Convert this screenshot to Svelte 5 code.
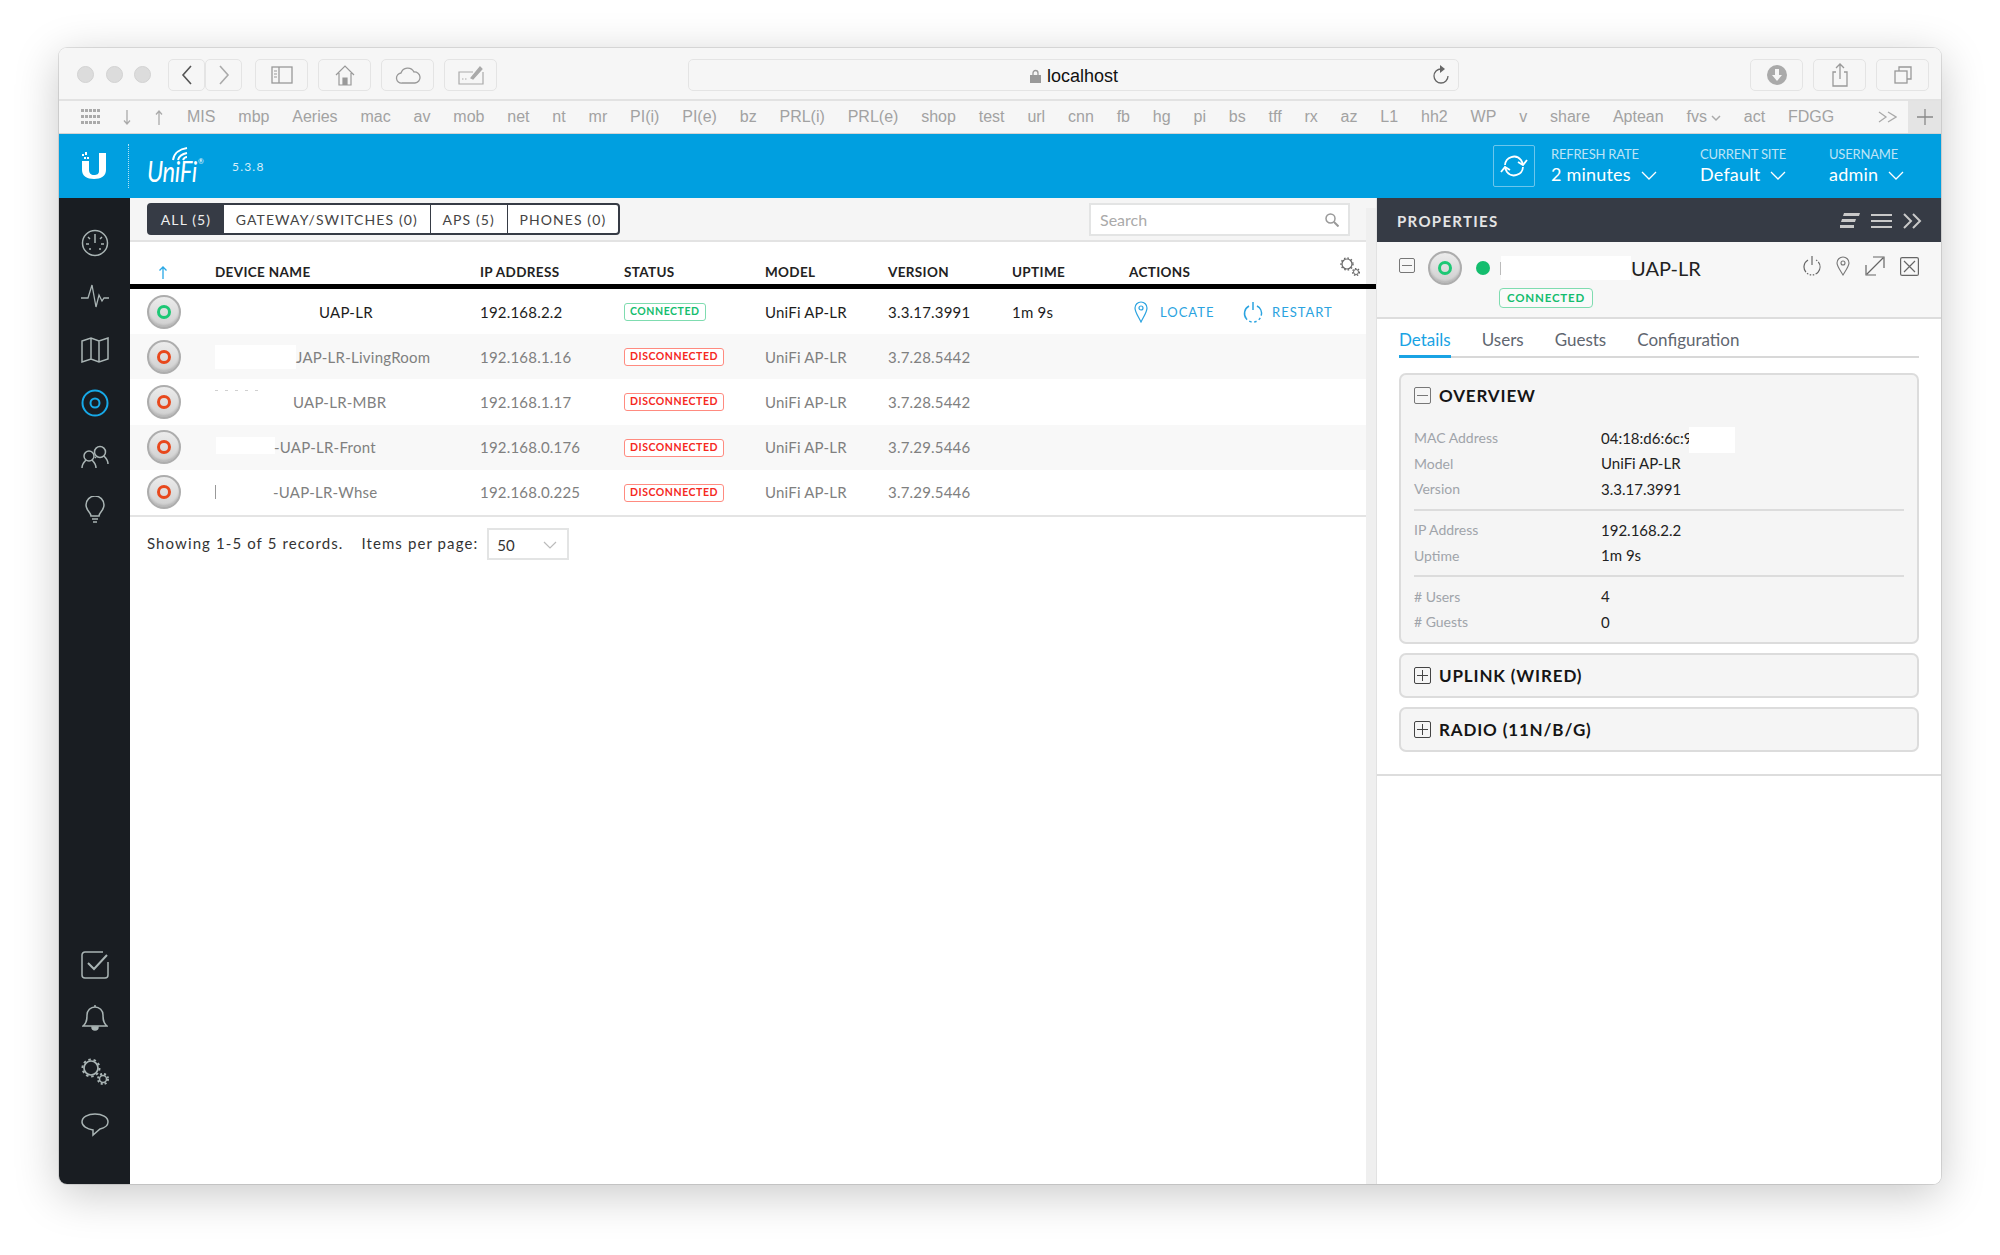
<script>
  const bookmarks = ['MIS','mbp','Aeries','mac','av','mob','net','nt','mr','PI(i)','PI(e)','bz','PRL(i)','PRL(e)','shop','test','url','cnn','fb','hg','pi','bs','tff','rx','az','L1','hh2','WP','v','share','Aptean','fvs','act','FDGG'];

  const filters = ['ALL (5)', 'GATEWAY/SWITCHES (0)', 'APS (5)', 'PHONES (0)'];
  const columns = ['', 'DEVICE NAME', 'IP ADDRESS', 'STATUS', 'MODEL', 'VERSION', 'UPTIME', 'ACTIONS'];

  const devices = [
    { name: 'UAP-LR', gap: 104, kind: 'blank', ip: '192.168.2.2', version: '3.3.17.3991', uptime: '1m 9s', up: true },
    { name: 'JAP-LR-LivingRoom', gap: 81, kind: 'mask', ip: '192.168.1.16', version: '3.7.28.5442' },
    { name: 'UAP-LR-MBR', gap: 78, kind: 'specks', ip: '192.168.1.17', version: '3.7.28.5442' },
    { name: '-UAP-LR-Front', gap: 59, kind: 'mask small', ip: '192.168.0.176', version: '3.7.29.5446' },
    { name: '-UAP-LR-Whse', gap: 58, kind: 'tick', ip: '192.168.0.225', version: '3.7.29.5446' }
  ];

  const overview = [
    [['MAC Address', '04:18:d6:6c:9'], ['Model', 'UniFi AP-LR'], ['Version', '3.3.17.3991']],
    [['IP Address', '192.168.2.2'], ['Uptime', '1m 9s']],
    [['# Users', '4'], ['# Guests', '0']]
  ];
</script>

<div class="window">
  <div class="titlebar">
    <div class="lights"><i></i><i></i><i></i></div>
    <div class="nav-pair">
      <button class="tb nav">
        <svg width="14" height="22" viewBox="0 0 14 22"><path d="M11 2 3 11l8 9" fill="none" stroke="#555" stroke-width="1.6"/></svg>
      </button>
      <button class="tb nav">
        <svg width="14" height="22" viewBox="0 0 14 22"><path d="m3 2 8 9-8 9" fill="none" stroke="#aaa" stroke-width="1.6"/></svg>
      </button>
    </div>
    <button class="tb wide tb-first">
      <svg width="22" height="18" viewBox="0 0 22 18" fill="none" stroke="#999" stroke-width="1.3"><rect x="1" y="1" width="20" height="16"/><path d="M8 1v16"/><path d="M3 5h3M3 8h3M3 11h3" stroke-width="1"/></svg>
    </button>
    <button class="tb wide">
      <svg width="20" height="22" viewBox="0 0 20 22" fill="none" stroke="#999" stroke-width="1.2"><path d="M1 11 10 2l9 9M4 9v12h12V9"/><path d="M8 21v-7h4v7" fill="#999"/></svg>
    </button>
    <button class="tb wide">
      <svg width="26" height="18" viewBox="0 0 26 18" fill="none" stroke="#999" stroke-width="1.3"><path d="M7 17a5 5 0 0 1-1-10 7 7 0 0 1 13-1 5.500 5.500 0 0 1 1 11z"/></svg>
    </button>
    <button class="tb wide">
      <svg width="26" height="20" viewBox="0 0 26 20" fill="none" stroke="#aaa" stroke-width="1.2"><path d="M15 7H1v12h24V7"/><path d="M4 14h6" stroke-dasharray="1.500 1.500"/><path d="m13 13 9-11 2 2-9 10z" fill="#aaa"/></svg>
    </button>
    <div class="url">
      <svg width="11" height="14" viewBox="0 0 11 14"><path d="M3 6V4a2.500 2.500 0 0 1 5 0v2" fill="none" stroke="#999" stroke-width="1.300"/><rect y="6" width="11" height="8" fill="#999"/></svg>
      <span>localhost</span>
      <svg class="reload" width="18" height="20" viewBox="0 0 18 20" fill="none" stroke="#666" stroke-width="1.300"><path d="M9 4a7 7 0 1 0 7 7"/><path d="M8 0l5 4-5 4z" fill="#666" stroke="none"/></svg>
    </div>
    <div class="tb-right">
      <button class="tb wide">
        <svg width="20" height="20" viewBox="0 0 20 20"><circle cx="10" cy="10" r="10" fill="#aaa"/><path d="M8 4h4v6h3l-5 6-5-6h3z" fill="#f6f6f6"/></svg>
      </button>
      <button class="tb wide">
        <svg width="18" height="24" viewBox="0 0 18 24" fill="none" stroke="#999" stroke-width="1.300"><path d="M5 9H2v14h14V9h-3M9 16V2M5 5l4-4 4 4"/></svg>
      </button>
      <button class="tb wide">
        <svg width="18" height="18" viewBox="0 0 18 18" fill="none" stroke="#999" stroke-width="1.300"><rect x="1" y="5" width="12" height="12"/><path d="M5 5V1h12v12h-4"/></svg>
      </button>
    </div>
  </div>

  <div class="bookmarks">
    <svg class="grid-ico" width="20" height="16" viewBox="0 0 20 16" fill="#aaa">
      {#each [0, 6, 12] as y}
        {#each [0, 4, 8, 12, 16] as x}<rect {x} {y} width="3" height="3"/>{/each}
      {/each}
    </svg>
    <svg class="arr first-arr" width="10" height="15" viewBox="0 0 10 15" fill="none" stroke="#aaa" stroke-width="1.300"><path d="M5 0v14M2 10.500l3 3.500 3-3.500"/></svg>
    <svg class="arr" width="10" height="15" viewBox="0 0 10 15" fill="none" stroke="#aaa" stroke-width="1.300"><path d="M5 15V1M2 4.500 5 1l3 3.500"/></svg>
    <div class="marks">
      {#each bookmarks as b}
        <span>{b}{#if b === 'fvs'}<svg class="fvs" width="10" height="7" viewBox="0 0 10 7"><path d="m1 1 4 4 4-4" fill="none" stroke="#aaa" stroke-width="1.500"/></svg>{/if}</span>
      {/each}
    </div>
    <svg class="more" width="19" height="12" viewBox="0 0 19 12" fill="none" stroke="#aaa" stroke-width="1.300"><path d="m1 1 7 5-7 5M10 1l8 5-8 5"/></svg>
    <span class="plus">
      <svg width="16" height="16" viewBox="0 0 16 16"><path d="M8 0v16M0 8h16" stroke="#888" stroke-width="1.300"/></svg>
    </span>
  </div>

  <header class="topbar">
    <svg class="u-logo" width="24" height="27" viewBox="0 0 24 27" fill="#fff">
      <path d="M0 9h7v9c0 3 2 5 5 5 3 0 5-1 5-4V1h7v17c0 6-5 9-12 9S0 24 0 18z"/>
      <rect x="0" y="2" width="2" height="2"/><rect x="3" y="0" width="2" height="3"/><rect x="2" y="5" width="2" height="2"/><rect x="5" y="5" width="2" height="2"/>
    </svg>
    <span class="dotted"></span>
    <div class="unifi">
      <svg width="22" height="14" viewBox="0 0 22 14" fill="none" stroke="#fff" stroke-width="2"><path d="M2 13C3 6 9 2 16 1M7 13c1-4 4-6 9-7M12 13c1-2 2-3 4-3"/></svg>
      <span class="uni-text">UniFi</span><span class="reg">®</span>
    </div>
    <span class="ver">5.3.8</span>

    <div class="top-right">
      <button class="refresh">
        <svg width="28" height="24" viewBox="0 0 28 24" fill="none" stroke="#fff" stroke-width="1.800"><path d="M5 11a9 9 0 0 1 16-5l2 4"/><path d="m27 6-4 5-5-3"/><path d="M23 13a9 9 0 0 1-16 5l-2-4"/><path d="m1 18 4-5 5 3"/></svg>
      </button>
      <div class="drop d1"><small>REFRESH RATE</small><b>2 minutes<svg width="16" height="9" viewBox="0 0 16 9"><path d="m1 1 7 7 7-7" fill="none" stroke="#fff" stroke-width="1.300"/></svg></b></div>
      <div class="drop d2"><small>CURRENT SITE</small><b>Default<svg width="16" height="9" viewBox="0 0 16 9"><path d="m1 1 7 7 7-7" fill="none" stroke="#fff" stroke-width="1.300"/></svg></b></div>
      <div class="drop d3"><small>USERNAME</small><b>admin<svg width="16" height="9" viewBox="0 0 16 9"><path d="m1 1 7 7 7-7" fill="none" stroke="#fff" stroke-width="1.300"/></svg></b></div>
    </div>
  </header>

  <div class="body">
    <nav class="side">
      <div class="side-group top">
        <span class="side-ico"><svg width="28" height="28" viewBox="0 0 28 28" fill="none" stroke="#a9b4b4" stroke-width="1.500"><circle cx="14" cy="14" r="12.500"/><path d="M14 5v9M7 8l2 2M21 8l-2 2M5 15h3M23 15h-3M8 20h2M20 20h-2"/></svg></span>
        <span class="side-ico"><svg width="30" height="26" viewBox="0 0 30 26" fill="none" stroke="#a9b4b4" stroke-width="1.300"><path d="M1 15h7l4-13 4 22 3-12 3 6 2-3h5"/></svg></span>
        <span class="side-ico"><svg width="28" height="26" viewBox="0 0 28 26" fill="none" stroke="#a9b4b4" stroke-width="1.500"><path d="M1 4l9-3 8 3 9-3v21l-9 3-8-3-9 3zM10 1v21M18 4v21"/></svg></span>
        <span class="side-ico"><svg width="28" height="28" viewBox="0 0 28 28" fill="none" stroke="#17a9e8" stroke-width="2"><circle cx="14" cy="14" r="12.500"/><circle cx="14" cy="14" r="4.500"/></svg></span>
        <span class="side-ico"><svg width="28" height="24" viewBox="0 0 28 24" fill="none" stroke="#a9b4b4" stroke-width="1.500"><circle cx="8" cy="11" r="5"/><circle cx="19" cy="7" r="5.500"/><path d="M1 23c0-4 2-6 4-8M15 23c0-4-2-6-4-8M14 13l1-1M27 19c0-4-2-6-4-8"/></svg></span>
        <span class="side-ico"><svg width="20" height="28" viewBox="0 0 20 28" fill="none" stroke="#a9b4b4" stroke-width="1.500"><path d="M6 20c0-4-5-5-5-11a9 9 0 0 1 18 0c0 6-5 7-5 11z"/><path d="M7 23h6M8 26h4"/></svg></span>
      </div>
      <div class="side-group bottom">
        <span class="side-ico"><svg width="28" height="28" viewBox="0 0 28 28" fill="none" stroke="#a9b4b4" stroke-width="1.500"><path d="M22 1H4a3 3 0 0 0-3 3v20a3 3 0 0 0 3 3h20a3 3 0 0 0 3-3V11"/><path d="m7 12 6 6L26 4" stroke-width="2"/></svg></span>
        <span class="side-ico"><svg width="26" height="28" viewBox="0 0 26 28" fill="none" stroke="#a9b4b4" stroke-width="1.500"><path d="M1 22c4-3 4-7 4-11a8 8 0 0 1 16 0c0 4 0 8 4 11z"/><path d="M13 1v2"/><path d="M10 23a3 3 0 0 0 6 0z" fill="#a9b4b4"/></svg></span>
        <span class="side-ico"><svg width="28" height="28" viewBox="0 0 28 28" fill="none" stroke="#a9b4b4"><circle cx="10" cy="10" r="7" stroke-width="1.700"/><circle cx="10" cy="10" r="8.500" stroke-width="2" stroke-dasharray="2.500 2.800"/><circle cx="22" cy="21" r="3.500" stroke-width="1.500"/><circle cx="22" cy="21" r="5" stroke-width="2" stroke-dasharray="2 2"/></svg></span>
        <span class="side-ico"><svg width="28" height="24" viewBox="0 0 28 24" fill="none" stroke="#a9b4b4" stroke-width="1.500"><path d="M14 1C7 1 1 4 1 9c0 4 5 7 11 8l0 5 7-6c5-1 8-4 8-7 0-5-6-8-13-8z"/></svg></span>
      </div>
    </nav>

    <main class="main">
      <div class="toolbar">
        <div class="filters">
          {#each filters as f, i}
            <span class="filter" class:active={i === 0}>{f}</span>
          {/each}
        </div>
        <div class="search">
          <span>Search</span>
          <svg width="14" height="14" viewBox="0 0 14 14" fill="none" stroke="#999" stroke-width="1.500"><circle cx="5.500" cy="5.500" r="4.500"/><path d="m9 9 4.500 4.500" stroke-width="2"/></svg>
        </div>
      </div>

      <div class="thead">
        {#each columns as c, i}
          <span class="th">
            {#if i === 0}
              <svg width="10" height="13" viewBox="0 0 10 13" fill="none" stroke="#29a8e6" stroke-width="1.300"><path d="M5 13V1M1.500 4.500 5 1l3.500 3.500"/></svg>
            {:else}{c}{/if}
          </span>
        {/each}
        <svg class="th-gear" width="20" height="20" viewBox="0 0 20 20" fill="none" stroke="#666"><circle cx="7" cy="7" r="5" stroke-width="1.200"/><circle cx="7" cy="7" r="6" stroke-width="1.400" stroke-dasharray="1.500 2"/><circle cx="16" cy="15" r="2.500" stroke-width="1"/><circle cx="16" cy="15" r="3.500" stroke-width="1.200" stroke-dasharray="1.500 1.500"/></svg>
      </div>

      <div class="rows">
        {#each devices as d, i}
          <div class="row" class:alt={i % 2 === 1} class:off={!d.up}>
            <div class="cell-ico">
              <span class="dev"><i class:green={d.up}></i></span>
            </div>
            <div class="name">
              <span class="lead {d.kind}" style="width: {d.gap}px"></span>{d.name}
            </div>
            <div class="ip">{d.ip}</div>
            <div><span class="badge" class:bad={!d.up}>{d.up ? 'CONNECTED' : 'DISCONNECTED'}</span></div>
            <div>UniFi AP-LR</div>
            <div>{d.version}</div>
            <div>{d.uptime ?? ''}</div>
            {#if d.up}
              <div class="actions">
                <span class="act locate">
                  <svg width="14" height="22" viewBox="0 0 14 22" fill="none" stroke="#2aa3e0" stroke-width="1.200"><path d="M7 21C4 15 1 11 1 7a6 6 0 0 1 12 0c0 4-3 8-6 14z"/><circle cx="7" cy="7" r="2"/></svg>
                  LOCATE
                </span>
                <span class="act">
                  <svg width="20" height="22" viewBox="0 0 20 22" fill="none" stroke="#2aa3e0" stroke-width="1.500"><path d="M10 1v8"/><path d="M6 5a8.500 8.500 0 1 0 8 0" stroke-dasharray="16 2.500 2.500 2.500 2.500 2.500 2.500 2.500"/></svg>
                  RESTART
                </span>
              </div>
            {/if}
          </div>
        {/each}
      </div>

      <div class="pager">
        <span class="pager-text">Showing 1-5 of 5 records.</span>
        <span class="pager-text per">Items per page:</span>
        <div class="select">
          <span>50</span>
          <svg width="14" height="8" viewBox="0 0 14 8"><path d="m1 1 6 6 6-6" fill="none" stroke="#bbb" stroke-width="1.200"/></svg>
        </div>
      </div>

      <div class="scrollbar"></div>
    </main>

    <aside class="panel">
      <div class="panel-head">
        <span>PROPERTIES</span>
        <div class="panel-ico">
          <svg width="20" height="16" viewBox="0 0 20 16" fill="#c9c9c9"><path d="M4 0h16l-1 3H3zM2 6h14l-1 3H1zM0 12h14v3H0z"/></svg>
          <svg width="21" height="14" viewBox="0 0 21 14" stroke="#c9c9c9" stroke-width="2"><path d="M0 1h21M0 7h21M0 13h21"/></svg>
          <svg width="20" height="16" viewBox="0 0 20 16" fill="none" stroke="#c9c9c9" stroke-width="2"><path d="m1 1 7 7-7 7M10 1l7 7-7 7"/></svg>
        </div>
      </div>

      <div class="dev-head">
        <div class="dev-line">
          <svg class="box" width="16" height="15" viewBox="0 0 16 15" fill="none" stroke="#777"><rect x=".5" y=".5" width="15" height="14" rx="1.500"/><path d="M3 7.500h10"/></svg>
          <span class="dev big"><i class="green"></i></span>
          <span class="dot"></span>
          <span class="sep"></span>
          <span class="dev-mask"></span>
          <span class="dev-name">UAP-LR</span>
          <div class="dev-tools">
            <svg width="18" height="22" viewBox="0 0 18 22" fill="none" stroke="#666" stroke-width="1.200"><path d="M9 1v9"/><path d="M5 5a8 8 0 1 0 8 0" stroke-dasharray="14 1.500 1.500 1.500 1.500 1.500 1.500 1.500"/></svg>
            <svg width="14" height="20" viewBox="0 0 14 20" fill="none" stroke="#777" stroke-width="1.100"><path d="M7 19C4 14 1 10 1 7a6 6 0 0 1 12 0c0 3-3 7-6 12z"/><circle cx="7" cy="7" r="2"/></svg>
            <svg width="20" height="20" viewBox="0 0 20 20" fill="none" stroke="#666" stroke-width="1.200"><path d="M8 1h11v11M18 2 2 18M1 9v10h10"/></svg>
            <svg width="19" height="19" viewBox="0 0 19 19" fill="none" stroke="#666" stroke-width="1.200"><rect x=".6" y=".6" width="17.800" height="17.800" rx="1.500"/><path d="m4 4 11 11M15 4 4 15"/></svg>
          </div>
        </div>
        <span class="badge head-badge">CONNECTED</span>
      </div>

      <div class="panel-body">
        <div class="tabs">
          <span class="tab on">Details</span>
          <span class="tab">Users</span>
          <span class="tab">Guests</span>
          <span class="tab">Configuration</span>
        </div>

        <section class="card">
          <h3>
            <svg width="17" height="17" viewBox="0 0 17 17" fill="none" stroke="#777"><rect x=".5" y=".5" width="16" height="16" rx="1.500"/><path d="M3 8.500h11"/></svg>
            OVERVIEW
          </h3>
          {#each overview as group, g}
            <div class="group" class:lead-group={g === 0}>
              {#each group as [k, v]}
                <div class="kv"><span class="k">{k}</span><span class="v">{v}</span></div>
              {/each}
            </div>
          {/each}
          <span class="mac-mask"></span>
        </section>

        <section class="card closed">
          <h3>
            <svg width="17" height="17" viewBox="0 0 17 17" fill="none" stroke="#444"><rect x=".5" y=".5" width="16" height="16" rx="1.500"/><path d="M3 8.500h11M8.500 3v11"/></svg>
            UPLINK (WIRED)
          </h3>
        </section>
        <section class="card closed">
          <h3>
            <svg width="17" height="17" viewBox="0 0 17 17" fill="none" stroke="#444"><rect x=".5" y=".5" width="16" height="16" rx="1.500"/><path d="M3 8.500h11M8.500 3v11"/></svg>
            RADIO (11N/B/G)
          </h3>
        </section>
      </div>
    </aside>
  </div>
</div>

<style>
  :global(body) {
    background: #fff;
    font-family: Lato, "Noto Sans", sans-serif;
  }

  .window {
    margin: 48px 59px 71px;
    height: 1136px;
    display: flex;
    flex-direction: column;
    border-radius: 8px;
    overflow: hidden;
    box-shadow: 0 10px 45px rgba(0, 0, 0, 0.22), 0 0 0 1px rgba(0, 0, 0, 0.1);
    background: #fff;
  }

  /* browser chrome */
  .titlebar {
    height: 53px;
    box-sizing: border-box;
    padding-top: 11px;
    display: flex;
    align-items: flex-start;
    background: #f6f6f6;
    border-bottom: 2px solid #e2e2e2;
  }
  .lights {
    display: flex;
    gap: 11.500px;
    margin: 7px 0 0 18px;
    width: 91px;
  }
  .lights i {
    width: 17px;
    height: 17px;
    border-radius: 50%;
    background: #dcdcdc;
    border: 1px solid #d2d2d2;
    box-sizing: border-box;
  }
  .tb {
    height: 32px;
    padding: 0;
    display: flex;
    align-items: center;
    justify-content: center;
    background: #f6f6f6;
    border: 1px solid #e4e4e4;
    border-radius: 5px;
  }
  .nav-pair { display: flex; }
  .nav { width: 37px; }
  .wide { width: 53px; margin-left: 10px; }
  .tb-first { margin-left: 13px; }
  .url {
    position: relative;
    margin-left: 191px;
    width: 771px;
    height: 32px;
    box-sizing: border-box;
    display: flex;
    align-items: center;
    justify-content: center;
    gap: 6px;
    border: 1px solid #e4e4e4;
    border-radius: 5px;
    padding: 2px 0 0 1px;
    font: 18px "Liberation Sans", sans-serif;
    color: #111;
  }
  .reload { position: absolute; right: 8px; top: 5px; }
  .tb-right { display: flex; margin-left: 281px; }
  .tb-right .wide:first-child { margin-left: 10px; }

  .bookmarks {
    height: 33px;
    display: flex;
    align-items: center;
    background: #f6f6f6;
    border-bottom: 1px solid #d4d4d4;
    font: 16px "Liberation Sans", sans-serif;
    color: #a2a2a2;
    box-sizing: border-box;
  }
  .grid-ico { margin-left: 22px; }
  .arr { margin-left: 22px; }
  .first-arr { margin-left: 21px; }
  .marks {
    display: flex;
    gap: 22.850px;
    margin-left: 23px;
    white-space: nowrap;
  }
  .fvs { margin-left: 4px; }
  .more { margin-left: auto; margin-right: 11px; }
  .plus {
    width: 33px;
    height: 32px;
    display: flex;
    align-items: center;
    justify-content: center;
    background: #e4e4e4;
  }

  /* app header */
  .topbar {
    height: 64px;
    flex: none;
    background: #009fe0;
    color: #fff;
    display: flex;
    align-items: center;
    position: relative;
  }
  .u-logo { margin-left: 23px; margin-top: -2px; }
  .dotted {
    margin-left: 22px;
    height: 44px;
    border-left: 1px dotted rgba(255, 255, 255, 0.7);
  }
  .unifi {
    position: relative;
    width: 58px;
    height: 40px;
    margin-left: 18px;
    margin-top: -3px;
  }
  .unifi svg { position: absolute; left: 24px; top: 2px; }
  .uni-text {
    position: absolute;
    left: 0;
    top: 12px;
    font: italic 400 28px/28px Lato, sans-serif;
    letter-spacing: -0.5px;
    transform: scaleX(0.85);
    transform-origin: left;
  }
  .reg { position: absolute; left: 51px; top: 12px; font-size: 7px; }
  .ver {
    margin-left: 27px;
    margin-top: 1px;
    font-size: 12px;
    letter-spacing: 1.200px;
    color: #d6eef9;
  }
  .top-right {
    margin-left: auto;
    display: flex;
    align-items: center;
  }
  .refresh {
    width: 42px;
    height: 42px;
    padding: 0;
    display: flex;
    align-items: center;
    justify-content: center;
    background: none;
    border: 1px solid #6cc6ec;
    border-radius: 2px;
  }
  .drop { display: flex; flex-direction: column; margin-top: -2px; }
  .drop small {
    font-size: 13px;
    line-height: 18px;
    color: #bde4f6;
    letter-spacing: -0.2px;
  }
  .drop b {
    font-weight: 400;
    font-size: 18px;
    line-height: 22px;
    letter-spacing: 0.2px;
    white-space: nowrap;
  }
  .drop svg { margin-left: 10px; vertical-align: 1px; }
  .d1 { margin-left: 16px; width: 149px; }
  .d2 { width: 129px; }
  .d3 { width: 112px; }

  /* layout */
  .body {
    flex: 1;
    min-height: 0;
    display: flex;
  }
  .side {
    width: 71px;
    flex: none;
    background: #191d22;
    display: flex;
    flex-direction: column;
    justify-content: space-between;
  }
  .side-group { display: flex; flex-direction: column; }
  .side-group.top { padding-top: 18px; }
  .side-group.bottom { padding-bottom: 32px; }
  .side-ico {
    height: 53.500px;
    display: flex;
    align-items: center;
    justify-content: center;
    padding-left: 1px;
  }

  .main {
    width: 1246px;
    flex: none;
    position: relative;
    font-size: 15px;
    letter-spacing: 0.2px;
    color: #1d1d1d;
  }
  .scrollbar {
    position: absolute;
    right: 0;
    top: 10px;
    bottom: 0;
    width: 10px;
    background: #efefef;
  }

  .toolbar {
    height: 44px;
    box-sizing: border-box;
    padding: 5px 26px 0 17px;
    display: flex;
    justify-content: space-between;
    align-items: flex-start;
    background: #f5f5f5;
    border-bottom: 2px solid #e3e3e3;
  }
  .filters {
    display: flex;
    height: 32px;
    box-sizing: border-box;
    border: 2px solid #363b45;
    border-radius: 4px;
    font-size: 14px;
    letter-spacing: 1.100px;
    color: #444;
    background: #fff;
  }
  .filter {
    display: flex;
    align-items: center;
    padding: 0 11.800px;
    border-left: 1px solid #363b45;
    white-space: nowrap;
  }
  .filter:first-child { border-left: 0; }
  .filter.active { background: #363b45; color: #eee; }

  .search {
    width: 261px;
    height: 33px;
    box-sizing: border-box;
    padding: 0 9px;
    display: flex;
    align-items: center;
    justify-content: space-between;
    background: #fff;
    border: 2px solid #e3e4e4;
    font-size: 16px;
    letter-spacing: 0;
    color: #aaa;
  }

  .thead {
    position: relative;
    z-index: 1;
    height: 47px;
    box-sizing: border-box;
    padding-top: 18px;
    display: grid;
    grid-template-columns: 85px 265px 144px 141px 123px 124px 117px 1fr;
    align-items: center;
    border-bottom: 5px solid #000;
    font-weight: 700;
    font-size: 13.500px;
    letter-spacing: 0.35px;
    color: #222;
  }
  .th:first-child { padding-left: 28px; line-height: 0; }
  .th-gear { position: absolute; right: 16px; top: 15px; }

  .rows {
    border-bottom: 2px solid #e4e4e4;
    margin-right: 10px;
  }
  .row {
    height: 45.200px;
    display: grid;
    grid-template-columns: 85px 265px 144px 141px 123px 124px 117px 1fr;
    align-items: center;
    white-space: nowrap;
  }
  .row.alt { background: #f8f8f8; }
  .row.off { color: #808080; }

  .cell-ico { padding-left: 17px; line-height: 0; }
  .dev {
    width: 34px;
    height: 34px;
    box-sizing: border-box;
    display: inline-flex;
    align-items: center;
    justify-content: center;
    border-radius: 50%;
    border: 2px solid #adadad;
    background: linear-gradient(#ececec, #cfcfcf);
    box-shadow: inset 0 -2px 2px rgba(0, 0, 0, 0.12);
  }
  .dev i {
    width: 14px;
    height: 14px;
    box-sizing: border-box;
    border-radius: 50%;
    border: 3px solid #e8481c;
  }
  .dev i.green { border-color: #1dc875; }

  .name { display: flex; align-items: center; letter-spacing: 0.25px; }
  .lead { display: block; flex: none; height: 24px; }
  .lead.mask { background: #fff; }
  .lead.small { height: 17px; margin-left: 1px; margin-right: -1px; margin-bottom: 4px; }
  .lead.specks {
    height: 1px;
    margin-bottom: 22px;
    background: repeating-linear-gradient(90deg, #d0d0d0 0 3px, #fff0 3px 10px);
    background-size: 47px 1px;
    background-repeat: no-repeat;
  }
  .lead.tick {
    height: 14px;
    border-left: 1px solid #999;
    box-sizing: border-box;
  }

  .badge {
    display: inline-block;
    box-sizing: border-box;
    height: 18px;
    line-height: 15px;
    padding: 0 5px;
    border: 1px solid #7fdcb0;
    border-radius: 3px;
    background: #fff;
    color: #14bd6e;
    font-size: 10.500px;
    font-weight: 700;
    letter-spacing: 0.55px;
    vertical-align: 2px;
  }
  .badge.bad { border-color: #ff8b80; color: #f5281e; }

  .actions {
    display: flex;
    align-items: center;
    color: #2aa3e0;
    font-size: 13px;
    letter-spacing: 1px;
    padding-top: 1px;
  }
  .act { display: flex; align-items: center; gap: 9px; }
  .locate { margin-left: 5px; width: 109px; gap: 12px; }

  .pager {
    display: flex;
    align-items: center;
    height: 32px;
    padding: 11px 0 0 17px;
    font-size: 15px;
    letter-spacing: 1.100px;
    color: #333;
  }
  .pager-text { margin-top: -2px; }
  .per { margin-left: 18px; }
  .select {
    margin-left: 9px;
    width: 82px;
    height: 32px;
    box-sizing: border-box;
    padding: 2px 10px 0 8px;
    display: flex;
    align-items: center;
    justify-content: space-between;
    border: 2px solid #e3e4e4;
    letter-spacing: 0;
  }

  /* properties panel */
  .panel {
    flex: 1;
    border-left: 1px solid #e2e2e2;
    position: relative;
    background: #fff;
    color: #222;
  }
  .panel-head {
    height: 44px;
    box-sizing: border-box;
    padding: 1px 18px 0 20px;
    display: flex;
    align-items: center;
    justify-content: space-between;
    background: #363b45;
    color: #e4e4e4;
    font-size: 15px;
    font-weight: 700;
    letter-spacing: 1.300px;
  }
  .panel-ico { display: flex; align-items: center; gap: 11px; }

  .dev-head {
    height: 77px;
    box-sizing: border-box;
    padding: 9px 0 0 22px;
    background: #f7f7f7;
    border-bottom: 2px solid #ddd;
  }
  .dev-line {
    display: flex;
    align-items: center;
    height: 34px;
  }
  .box { margin-bottom: 6px; }
  .dev-line .dev { margin-left: 13px; }
  .dot {
    width: 14px;
    height: 14px;
    border-radius: 50%;
    background: #14bd6e;
    margin-left: 14px;
    flex: none;
  }
  .sep { height: 13px; border-left: 1px solid #bbb; margin-left: 10px; }
  .dev-mask { width: 130px; height: 24px; background: #fff; }
  .dev-name { font-size: 20px; color: #222; }
  .dev-tools {
    margin-left: auto;
    margin-right: 22px;
    margin-bottom: 4px;
    display: flex;
    align-items: center;
    gap: 15px;
  }
  .head-badge {
    display: block;
    width: 94px;
    height: 20px;
    margin: 3px 0 0 100px;
    line-height: 17px;
    text-align: center;
    padding: 0;
    font-size: 11.500px;
    letter-spacing: 0.8px;
    background: #fafafa;
    border-radius: 4px;
  }

  .panel-body {
    padding: 0 22px 22px 22px;
    border-bottom: 2px solid #ddd;
  }
  .tabs {
    height: 39px;
    display: flex;
    gap: 31px;
    box-sizing: border-box;
    border-bottom: 2px solid #d8d8d8;
    font-size: 17px;
    color: #5f6670;
    align-items: flex-end;
  }
  .tab { height: 30px; line-height: 24px; box-sizing: border-box; margin-bottom: -2px; }
  .tab.on { color: #19a3e4; border-bottom: 3px solid #19a3e4; }

  .card {
    position: relative;
    margin-top: 9px;
    box-sizing: border-box;
    background: #f5f5f5;
    border: 2px solid #dcdcdc;
    border-radius: 7px;
    padding: 0 13px 7px;
  }
  .tabs + .card { margin-top: 15px; }
  .card h3 {
    margin: -2px 0 0;
    height: 45px;
    display: flex;
    align-items: center;
    gap: 8px;
    font-size: 17px;
    font-weight: 700;
    letter-spacing: 0.850px;
    color: #151515;
  }
  .card.closed { height: 45px; padding-bottom: 0; }
  .card.closed h3 { height: 43px; margin-top: -1px; }
  .group {
    border-top: 2px solid #dcdcdc;
    padding: 6.500px 0 7px;
  }
  .group.lead-group { border-top: 0; padding-top: 7px; }
  .group:last-of-type { padding-bottom: 0; }
  .kv {
    display: flex;
    align-items: center;
    height: 25.500px;
  }
  .k { width: 187px; font-size: 14px; color: #a0a4aa; }
  .v { font-size: 15px; color: #222; }
  .mac-mask {
    position: absolute;
    left: 288px;
    top: 52px;
    width: 46px;
    height: 26px;
    background: #fff;
  }
</style>
